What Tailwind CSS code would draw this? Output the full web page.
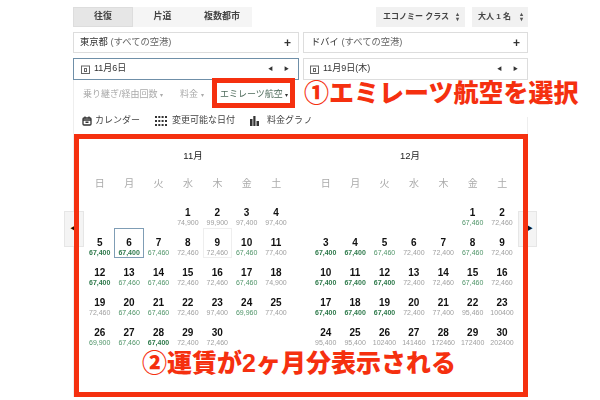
<!DOCTYPE html>
<html lang="ja">
<head>
  <meta charset="UTF-8">
  <title>フライト検索</title>
  <script src="https://cdn.jsdelivr.net/npm/@tailwindcss/browser@4"></script>
</head>
<body class="w-[600px] h-[400px] overflow-hidden bg-white relative font-['Liberation_Sans','Noto_Sans_CJK_JP',sans-serif] text-[#333]">

  <div class="w-[455px] ml-[73px] pt-[7px] blur-[0.3px]">
    <!-- trip type + selects -->
    <div class="flex h-[20px] text-[9px] font-bold text-[#444] whitespace-nowrap">
      <div class="w-[60px] flex items-center justify-center bg-[#e6e6e6] border border-[#ddd]">往復</div>
      <div class="w-[59px] flex items-center justify-center bg-[#f5f5f5]">片道</div>
      <div class="w-[60px] flex items-center justify-center bg-[#f5f5f5]">複数都市</div>
      <div class="w-[89px] ml-auto flex items-center justify-between pl-[7px] pr-[6px] bg-[#f1f1f1] text-[8px]">エコノミー クラス <span class="text-[6px] leading-[5px] text-[#555] flex flex-col"><span>▴</span><span>▾</span></span></div>
      <div class="w-[56px] ml-[7px] flex items-center justify-between pl-[6px] pr-[5px] bg-[#f1f1f1] text-[8px]">大人 1 名 <span class="text-[6px] leading-[5px] text-[#555] flex flex-col"><span>▴</span><span>▾</span></span></div>
    </div>

    <!-- airports -->
    <div class="flex gap-[4px] mt-[5px]">
      <div class="w-[226px] h-[21px] border border-[#ddd] flex items-center justify-between pl-[6px] pr-[7px] text-[9.3px]">
        <span>東京都 <span class="text-[#666]">(すべての空港)</span></span><span class="text-[12px] font-bold">+</span>
      </div>
      <div class="w-[225px] h-[21px] border border-[#ddd] flex items-center justify-between pl-[7px] pr-[7px] text-[9.3px]">
        <span>ドバイ <span class="text-[#666]">(すべての空港)</span></span><span class="text-[12px] font-bold">+</span>
      </div>
    </div>

    <!-- dates -->
    <div class="flex gap-[4px] mt-[5px]">
      <div class="w-[226px] h-[22px] border border-[#6f8fa8] flex items-center pl-[7px] pr-[9px] text-[9px]">
        <svg class="w-[9px] h-[9px] mr-[4px]" viewBox="0 0 9 9" fill="none" stroke="#666"><rect x="0.5" y="1" width="8" height="7.5"/><rect x="3.5" y="3.5" width="2" height="3"/></svg>
        <span>11月6日</span>
        <span class="ml-auto text-[5px] text-[#333]">◀</span><span class="ml-[11px] text-[5px] text-[#333]">▶</span>
      </div>
      <div class="w-[225px] h-[22px] border border-[#ddd] flex items-center pl-[6px] pr-[9px] text-[9px]">
        <svg class="w-[9px] h-[9px] mr-[4px]" viewBox="0 0 9 9" fill="none" stroke="#666"><rect x="0.5" y="1" width="8" height="7.5"/><rect x="3.5" y="3.5" width="2" height="3"/></svg>
        <span>11月9日(木)</span>
        <span class="ml-auto text-[5px] text-[#333]">◀</span><span class="ml-[11px] text-[5px] text-[#333]">▶</span>
      </div>
    </div>

    <!-- filters -->
    <div class="border-x border-[#eee] h-[54px] flex flex-col whitespace-nowrap">
      <div class="flex items-center h-[28px] pt-[1px] pl-[9px] text-[9px] text-[#aaa]">
        <span class="w-[97px]">乗り継ぎ/経由回数 <span class="text-[6px]">▾</span></span>
        <span class="w-[40px]">料金 <span class="text-[6px]">▾</span></span>
        <span class="text-[#4d6a5a]">エミレーツ航空 <span class="text-[6px] text-[#333]">▾</span></span>
      </div>
      <div class="flex items-center h-[26px] pl-[8px] text-[9px] text-[#444]">
        <svg class="w-[10px] h-[10px] mr-[3px]" viewBox="0 0 10 10" fill="none" stroke="#333" stroke-width="1.3"><rect x="1" y="2" width="8" height="7" rx="1"/><path d="M3 0.5v2M7 0.5v2M1 4h8"/><rect x="3.5" y="5.5" width="3" height="1.5" fill="#333" stroke="none"/></svg>
        <span class="w-[60px]">カレンダー</span>
        <svg class="w-[12px] h-[10px] mr-[5px]" viewBox="0 0 12 10" fill="#333"><rect x="0" y="0" width="2" height="2"/><rect x="3.3" y="0" width="2" height="2"/><rect x="6.6" y="0" width="2" height="2"/><rect x="10" y="0" width="2" height="2"/><rect x="0" y="4" width="2" height="2"/><rect x="3.3" y="4" width="2" height="2"/><rect x="6.6" y="4" width="2" height="2"/><rect x="10" y="4" width="2" height="2"/><rect x="0" y="8" width="2" height="2"/><rect x="3.3" y="8" width="2" height="2"/><rect x="6.6" y="8" width="2" height="2"/><rect x="10" y="8" width="2" height="2"/></svg>
        <span class="w-[78px]">変更可能な日付</span>
        <svg class="w-[9px] h-[10px] mr-[8px]" viewBox="0 0 9 10" fill="#333"><rect x="0" y="3" width="2.5" height="7"/><rect x="3.3" y="0" width="2.2" height="10"/><rect x="6.5" y="5" width="2.5" height="5"/></svg>
        <span>料金グラフ</span>
      </div>
    </div>

    <!-- two months -->
    <div class="flex pl-[11px] pt-[15px] border-x border-[#eee] h-[263px]" id="months"></div>
  </div>

  <!-- month paging buttons -->
  <div class="absolute left-[64px] top-[211px] w-[20px] h-[36px] bg-[#f4f4f4] border border-[#e6e6e6] flex items-center justify-end pr-[5px] text-[8px] text-[#111]">◀</div>
  <div class="absolute left-[518px] top-[211px] w-[19px] h-[36px] bg-[#f4f4f4] border border-[#e6e6e6] flex items-center pl-[6px] text-[8px] text-[#111]">▶</div>

  <!-- annotations -->
  <div class="absolute left-[300px] top-[80px] w-[300px] h-[37px] bg-white"></div>
  <div class="absolute left-[212px] top-[78px] w-[83px] h-[30px] border-[5px] border-[#f5300f]"></div>
  <div class="absolute left-[74px] top-[134px] w-[454px] h-[263px] border-[5px] border-[#f5300f]"></div>
  <div class="absolute left-[304px] top-[76px] text-[25px] leading-[34px] font-black text-[#f5300f] whitespace-nowrap">①エミレーツ航空を選択</div>
  <div class="absolute left-[142px] top-[344px] text-[25px] leading-[38px] font-black text-[#f5300f] whitespace-nowrap">②運賃が2ヶ月分表示される</div>

  <script>
    // g = cheapest fare (green), d = cheapest and darker
    const nov = [
      ["1","74,900"],["2","99,900"],["3","97,400"],["4","97,400"],
      ["5","67,400","d"],["6","67,400","d"],["7","67,460","g"],["8","72,460"],["9","72,460"],["10","67,460","g"],["11","77,400"],
      ["12","67,400","d"],["13","67,460","g"],["14","67,460","g"],["15","72,460"],["16","72,460"],["17","67,460","g"],["18","74,900"],
      ["19","72,460"],["20","67,460","g"],["21","67,460","g"],["22","72,460"],["23","97,400"],["24","69,960","g"],["25","77,400"],
      ["26","69,900","g"],["27","67,460","g"],["28","67,400","d"],["29","72,400"],["30","72,460"]
    ];
    const dec = [
      ["1","67,460","g"],["2","72,460"],
      ["3","67,400","d"],["4","67,400","d"],["5","67,460","g"],["6","72,400"],["7","72,400"],["8","67,460","g"],["9","72,400"],
      ["10","67,400","d"],["11","67,400","d"],["12","67,400","d"],["13","72,400"],["14","72,460"],["15","67,460","g"],["16","72,460"],
      ["17","67,400","d"],["18","67,400","d"],["19","67,400","d"],["20","72,400"],["21","77,400"],["22","95,460"],["23","100400"],
      ["24","95,400"],["25","95,400"],["26","102400"],["27","141460"],["28","172460"],["29","172400"],["30","202400"]
    ];
    const weekdays = ["日","月","火","水","木","金","土"];
    const priceClass = { g: "text-[#4f9468]", d: "text-[#2f7a4c] font-bold" };

    function renderMonth(title, offset, days, extraClass, titleClass) {
      let cells = "";
      for (let i = 0; i < offset; i++) cells += "<div></div>";
      days.forEach(function (d) {
        let box = "";
        if (title === "11月" && d[0] === "6") box = "border border-[#7f9db5] pt-[8px]";
        else if (title === "11月" && d[0] === "9") box = "border border-[#eee] pt-[8px]";
        else box = "pt-[9px]";
        cells += '<div class="flex flex-col items-center ' + box + '">' +
          '<span class="text-[10px] leading-[11px] font-bold text-[#111]">' + d[0] + "</span>" +
          '<span class="text-[7px] leading-[8px] mt-[1px] ' + (priceClass[d[2]] || "text-[#a0a0a0]") + '">' + d[1] + "</span></div>";
      });
      return '<div class="w-[206px] ' + extraClass + '">' +
        '<div class="text-[9.5px] leading-[14px] text-center text-[#222] ' + titleClass + '">' + title + "</div>" +
        '<div class="grid grid-cols-7 mt-[14px] h-[14px] text-[10px] leading-[14px] text-center text-[#aaa]">' +
        weekdays.map(function (w) { return "<div>" + w + "</div>"; }).join("") + "</div>" +
        '<div class="grid grid-cols-[repeat(7,29.4px)] auto-rows-[30px] mt-[7px]">' + cells + "</div></div>";
    }

    document.getElementById("months").innerHTML =
      renderMonth("11月", 3, nov, "", "pl-[10px]") +
      renderMonth("12月", 5, dec, "ml-[20px]", "pr-[8px]");
  </script>
</body>
</html>
